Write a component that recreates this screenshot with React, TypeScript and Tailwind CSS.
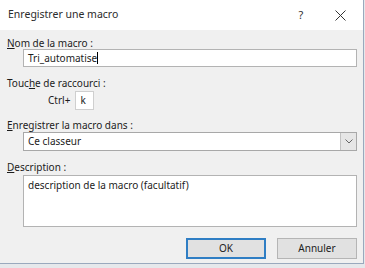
import React from "react";

const font = { fontFamily: '"Noto Sans", "Liberation Sans", sans-serif' };

export default function App() {
  return (
    <div className="w-[365px] h-[268px] bg-[#e6e8eb] overflow-hidden" style={font}>
      <div className="w-[364px] h-[264px] bg-[#f0f0f0] border-r border-b border-[#9aa9bd] flex flex-col text-[10px] text-[#1c1c1c]">
        <div className="h-[30px] bg-white flex items-center shrink-0">
          <span className="pl-[8px] text-[10.5px] text-[#2b2b2b]">Enregistrer une macro</span>
          <span className="ml-auto w-[10px] text-center text-[11px] text-[#333]">?</span>
          <span className="ml-[28px] mr-[17px] w-[12px] flex justify-center">
            <svg width="11" height="11" viewBox="0 0 11 11">
              <path d="M0.5 0.5 L10.5 10.5 M10.5 0.5 L0.5 10.5" stroke="#333" strokeWidth="1" />
            </svg>
          </span>
        </div>
        <div className="flex flex-col pl-[7px]">
          <div className="mt-[7px] leading-[12px]">
            <span className="underline underline-offset-1">N</span>om de la macro :
          </div>
          <div className="ml-[16px] w-[334px] h-[18px] bg-white border border-[#b3b3b3] flex items-center pl-[4px]">
            <span>Tri_automatise</span>
            <span className="w-px h-[12px] bg-black" />
          </div>
          <div className="mt-[10px] leading-[12px]">
            Touc<span className="underline underline-offset-1">h</span>e de raccourci :
          </div>
          <div className="mt-[2px] flex items-center">
            <span className="ml-[41px]">Ctrl+</span>
            <div className="ml-[5px] w-[19px] h-[19px] bg-white border border-[#cfcfcf] flex items-center pl-[4px]">k</div>
          </div>
          <div className="mt-[9px] leading-[12px]">
            <span className="underline underline-offset-1">E</span>nregistrer la macro dans :
          </div>
          <div className="mt-[1px] ml-[16px] w-[334px] h-[19px] bg-white border border-[#a8a8a8] flex items-center">
            <span className="pl-[4px]">Ce classeur</span>
            <div className="ml-auto w-[16px] h-full bg-[#e6e6e6] border-l border-[#c2c2c2] flex items-center justify-center">
              <svg width="8" height="5" viewBox="0 0 8 5">
                <path d="M0.5 0.5 L4 4 L7.5 0.5" stroke="#666" strokeWidth="1" fill="none" />
              </svg>
            </div>
          </div>
          <div className="mt-[10px] leading-[12px]">
            <span className="underline underline-offset-1">D</span>escription :
          </div>
          <div className="mt-[2px] ml-[16px] w-[334px] h-[52px] bg-white border border-[#b3b3b3] pl-[4px] pt-[2px] leading-[14px]">
            description de la macro (facultatif)
          </div>
          <div className="mt-[11px] flex justify-end pr-[6px] gap-[11px]">
            <button className="w-[80px] h-[21px] bg-[#e1e1e1] border-2 border-[#2f7ec4] flex items-center justify-center text-[10px]">
              OK
            </button>
            <button className="w-[80px] h-[21px] bg-[#e1e1e1] border border-[#b5b5b5] flex items-center justify-center text-[10px]">
              Annuler
            </button>
          </div>
        </div>
      </div>
    </div>
  );
}
